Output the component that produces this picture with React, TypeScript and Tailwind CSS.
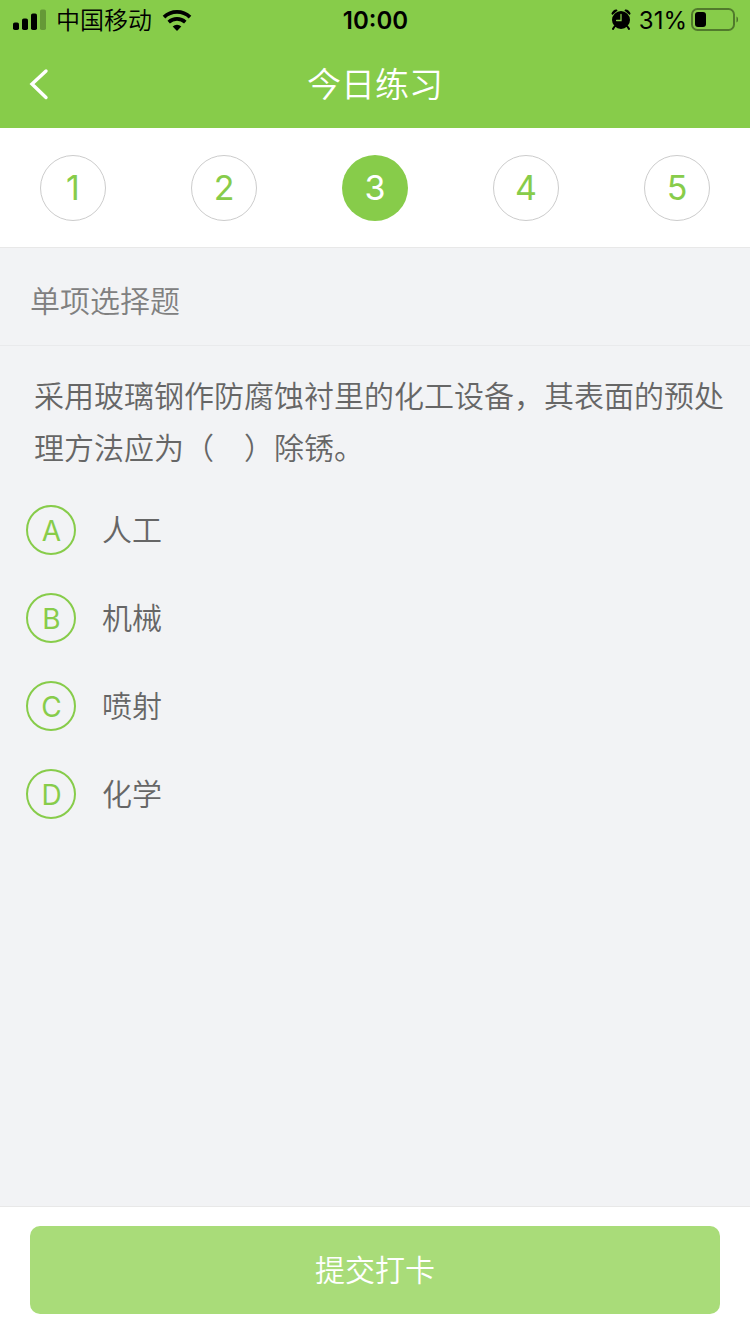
import { useState } from "react";

const steps = [1, 2, 3, 4, 5];

const options = [
    { key: "A", text: "人工" },
    { key: "B", text: "机械" },
    { key: "C", text: "喷射" },
    { key: "D", text: "化学" },
];

function SignalIcon() {
    return (
        <svg width="34" height="22" viewBox="0 0 34 22" aria-hidden="true">
            <rect x="1" y="13.5" width="6" height="7.5" rx="1.8" />
            <rect x="10" y="9.5" width="6" height="11.5" rx="1.8" />
            <rect x="19" y="4.5" width="6" height="16.5" rx="1.8" />
            <rect x="28" y="0.5" width="6" height="20.5" rx="1.8" opacity="0.25" />
        </svg>
    );
}

function WifiIcon() {
    return (
        <svg width="30" height="22" viewBox="0 0 30 22" aria-hidden="true">
            <path d="M10.7 17.5a6.2 6.2 0 0 1 8.6 0L15 22z" />
            <path d="M6.7 13.1a12.2 12.2 0 0 1 16.600 0" fill="none" stroke="currentColor" strokeWidth="3.600" />
            <path d="M2 8.1a19 19 0 0 1 26 0" fill="none" stroke="currentColor" strokeWidth="3.800" />
        </svg>
    );
}

function AlarmIcon() {
    return (
        <svg width="20" height="22" viewBox="0 0 20 22" aria-hidden="true">
            <circle cx="10" cy="11" r="9" />
            <path d="M0.4 4.8A5 5 0 0 1 5.8 0.6L6.6 1.6L1.4 6zM19.6 4.8A5 5 0 0 0 14.2 0.6L13.4 1.6L18.6 6z" />
            <path d="M3.6 17.5l-1.600 2.400M16.400 17.500l1.600 2.400" stroke="currentColor" strokeWidth="2" strokeLinecap="round" />
            <path d="M10 5.5v6H5.6" fill="none" stroke="#87cc4a" strokeWidth="1.3" strokeLinecap="round" />
        </svg>
    );
}

function BatteryIcon() {
    return (
        <svg width="48" height="24" viewBox="0 0 48 24" aria-hidden="true">
            <rect x="1" y="1" width="42" height="21" rx="5.5" fill="none" stroke="currentColor" strokeWidth="2" opacity="0.4" />
            <rect x="4" y="4" width="11" height="15" rx="3" />
            <path d="M45.5 8.5c2 .6 2 5.4 0 6z" opacity="0.45" />
        </svg>
    );
}

function StatusBar() {
    return (
        <div className="grid h-10 grid-cols-[1fr_auto_1fr] items-center pl-3 pr-[11px] text-2xl text-black">
            <div className="flex items-center gap-[10px]">
                <SignalIcon />
                <span className="pt-px">中国移动</span>
                <WifiIcon />
            </div>
            <span className="pt-px font-semibold">10:00</span>
            <div className="flex items-center justify-end gap-1">
                <AlarmIcon />
                <span className="pl-1 pt-px font-normal">31%</span>
                <BatteryIcon />
            </div>
        </div>
    );
}

export default function App() {
    const [step, setStep] = useState(3);
    const [answer, setAnswer] = useState("");

    return (
        <div className="flex min-h-screen flex-col bg-[#f2f3f5] font-['Inter','Noto_Sans_CJK_SC',sans-serif] font-[350] text-[#666]">
            <header className="bg-[#87cc4a] text-white">
                <StatusBar />
                <div className="grid h-[88px] grid-cols-[1fr_auto_1fr] items-center px-7">
                    <button type="button" aria-label="返回" className="w-fit">
                        <svg width="22" height="32" viewBox="0 0 22 32" fill="none" aria-hidden="true">
                            <path d="M18 3L4 16l14 13.5" stroke="currentColor" strokeWidth="3.4" strokeLinecap="round" />
                        </svg>
                    </button>
                    <h1 className="text-[34px] font-[350]">今日练习</h1>
                </div>
            </header>

            <nav className="flex h-[120px] items-center justify-between border-b border-[#e8e8e8] bg-white px-10">
                {steps.map((n) => (
                    <button
                        key={n}
                        type="button"
                        onClick={() => setStep(n)}
                        className={
                            n === step
                                ? "size-[66px] rounded-full bg-[#87cc4a] text-[34px] font-normal text-white"
                                : "size-[66px] rounded-full border border-[#ccc] bg-white text-[34px] font-normal text-[#87cc4a]"
                        }
                    >
                        {n}
                    </button>
                ))}
            </nav>

            <main className="flex-1">
                <h2 className="flex h-[98px] items-center border-b border-[#e9eaec] px-[30px] pb-1 pt-[14px] text-[30px] font-[350] text-[#808080]">
                    单项选择题
                </h2>
                <fieldset>
                    <legend className="pb-3 pl-[34px] pr-[26px] pt-6 text-[30px] leading-[52px]">
                        采用玻璃钢作防腐蚀衬里的化工设备，其表面的预处理方法应为（　）除锈。
                    </legend>
                    {options.map((o) => (
                        <label key={o.key} className="flex h-[88px] items-center gap-[26px] px-[26px] text-[30px]">
                            <span className="grid size-[50px] place-items-center text-[28px] font-normal text-[#87cc4a]">
                                <input
                                    type="radio"
                                    name="answer"
                                    value={o.key}
                                    checked={answer === o.key}
                                    onChange={() => setAnswer(o.key)}
                                    className="peer size-[50px] appearance-none rounded-full border-2 border-[#87cc4a] [grid-area:1/1] checked:bg-[#87cc4a]"
                                />
                                <span className="pl-px pt-px [grid-area:1/1] peer-checked:text-white">{o.key}</span>
                            </span>
                            <span>{o.text}</span>
                        </label>
                    ))}
                </fieldset>
            </main>

            <footer className="border-t border-[#e8e8e8] bg-white px-[30px] pb-5 pt-[19px]">
                <button type="button" className="h-[88px] w-full rounded-[10px] bg-[#a9dc79] text-[30px] text-white">
                    提交打卡
                </button>
            </footer>
        </div>
    );
}
